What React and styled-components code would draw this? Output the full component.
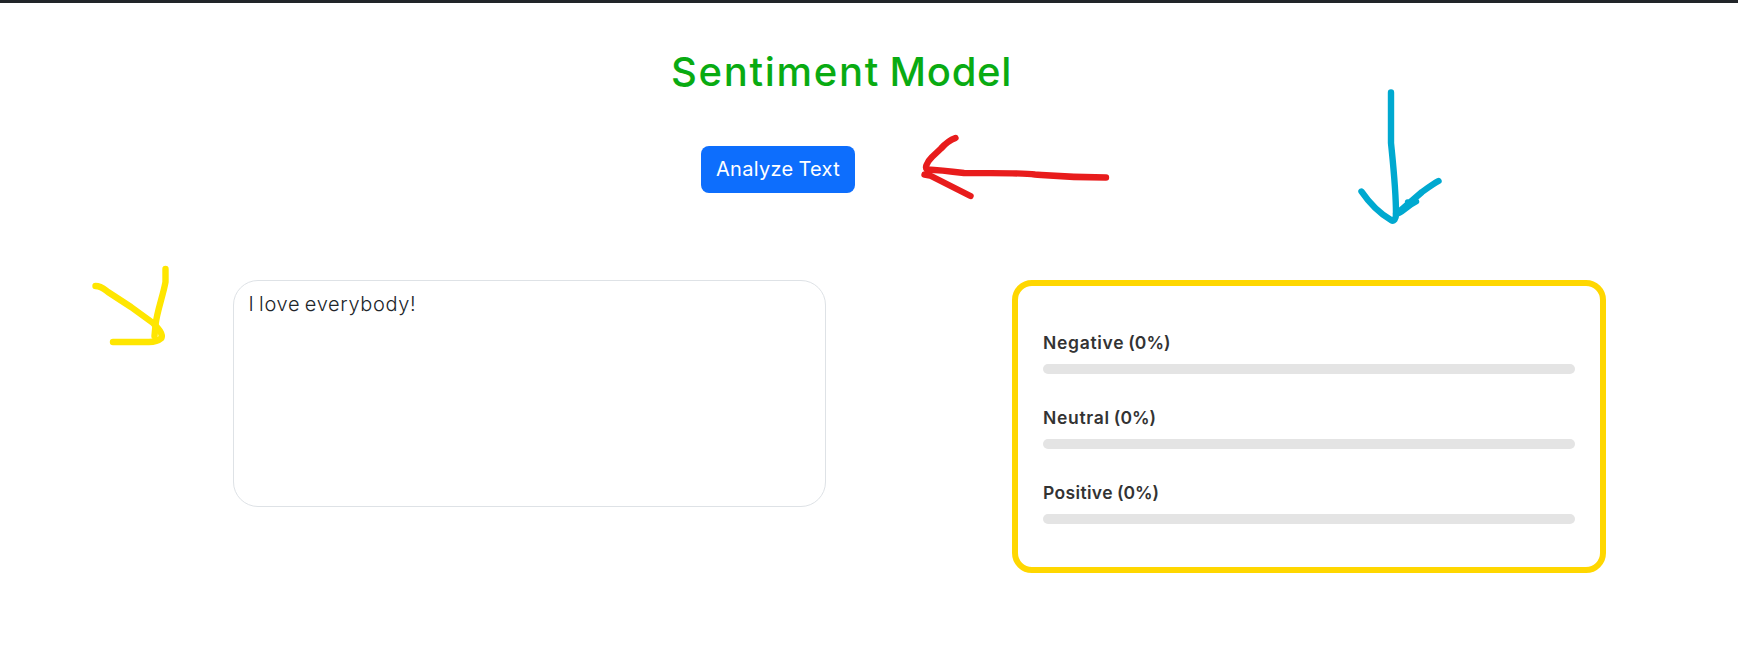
import React from "react";
import styled, { createGlobalStyle } from "styled-components";

const GlobalStyle = createGlobalStyle`
  *, *::before, *::after { box-sizing: border-box; }
  body {
    margin: 0;
    background: #fff;
    color: #212529;
    font-family: Inter, "Open Sans", sans-serif;
  }
`;

const Page = styled.div`
  position: relative;
  min-height: 651px;
  overflow: hidden;
`;

const NavEdge = styled.div`
  height: 3px;
  background: #212529;
`;

const Header = styled.header`
  display: flex;
  flex-direction: column;
  align-items: center;
  gap: 50px;
  padding: 45px 56px 0 0;
`;

const Title = styled.h1`
  display: flex;
  gap: 9.5px;
  width: 340px;
  margin: 0;
  color: #09ab12;
  font-size: 40px;
  font-weight: 500;
  line-height: 48px;
  white-space: nowrap;
`;

const Word = styled.span`
  letter-spacing: ${(p) => p.$track}px;
`;

const AnalyzeButton = styled.button`
  width: 154px;
  height: 47px;
  margin-right: 126px;
  padding: 0 0 2px;
  border: 0;
  border-radius: 8px;
  background: #0d6efd;
  color: #fff;
  font-family: inherit;
  font-size: 20px;
  letter-spacing: 0.3px;
  word-spacing: -1px;
  white-space: nowrap;
`;

const Columns = styled.main`
  display: grid;
  grid-template-columns: 593px 594px;
  gap: 186px;
  align-items: start;
  padding: 87px 0 0 233px;
`;

const TextInput = styled.textarea`
  display: block;
  width: 100%;
  height: 227px;
  padding: 8px 14.5px;
  border: 1px solid #dee2e6;
  border-radius: 25px;
  outline: 0;
  resize: none;
  background: #fff;
  color: #212529;
  font-family: inherit;
  font-size: 20px;
  font-weight: 350;
  line-height: 30px;
  letter-spacing: 0.65px;
  word-spacing: -1.6px;
`;

const ResultCard = styled.section`
  display: flex;
  flex-direction: column;
  gap: 30px;
  padding: 43px 25px;
  border: 6px solid #ffd700;
  border-radius: 20px;
`;

const Score = styled.div`
  display: flex;
  flex-direction: column;
  gap: 8px;
`;

const ScoreLabel = styled.div`
  display: flex;
  gap: 4px;
  color: #333;
  font-size: 17.5px;
  font-weight: 600;
  line-height: 27px;
`;

const Track = styled.div`
  height: 10px;
  border-radius: 5px;
  overflow: hidden;
  background: #e4e4e4;
`;

const Fill = styled.div`
  height: 100%;
  background: #0d6efd;
`;

const Annotations = styled.svg`
  position: absolute;
  inset: 0;
  pointer-events: none;
  fill: none;
  stroke-width: 6.4;
  stroke-linecap: round;
  stroke-linejoin: round;
`;

const scores = [
  { name: "Negative", value: 0, track: 0.7 },
  { name: "Neutral", value: 0, track: 0.7 },
  { name: "Positive", value: 0, track: 0.35 },
];

export default function App() {
  return (
    <Page>
      <GlobalStyle />
      <NavEdge />
      <Header>
        <Title>
          <Word $track={1.7}>Sentiment</Word>
          <Word $track={0.7}>Model</Word>
        </Title>
        <AnalyzeButton type="button">Analyze Text</AnalyzeButton>
      </Header>
      <Columns>
        <TextInput defaultValue="I love everybody!" spellCheck={false} />
        <ResultCard>
          {scores.map((s) => (
            <Score key={s.name}>
              <ScoreLabel>
                <Word $track={s.track}>{s.name}</Word>
                <Word $track={0}>({s.value}%)</Word>
              </ScoreLabel>
              <Track>
                <Fill style={{ width: `${s.value}%` }} />
              </Track>
            </Score>
          ))}
        </ResultCard>
      </Columns>
      <Annotations width="1738" height="651" viewBox="0 0 1738 651">
        <g stroke="#e81c1c">
          <path d="M955.5 138C950 140 945 144 941 148.500L932 157C926 163 925 168 927 169.500C940 170 952 171.500 964 173C990 173.500 1020 172.500 1035 174.500C1055 176 1070 177.500 1106 177.500" />
          <path d="M924.500 174.500L930 175.500L970.500 196" />
        </g>
        <g stroke="#00a9d0">
          <path d="M1391 92.500V143C1393 163 1396 190 1396 214C1396 219 1394 222 1391 220C1379 213 1370 204 1361.500 191.500" />
          <path d="M1396 214C1402 213 1405 207 1416 201.500L1408 202.500M1400 211L1422 192C1429 187 1433 184 1438.500 181" />
        </g>
        <g stroke="#ffe600">
          <path d="M95.500 286C101 286 104 289 108 292L131 307L153 323C159 329 163 334 161.500 338C158 341 154 342 149 342H113" />
          <path d="M165.500 269V282C163 296 157 311 155.500 325L154.500 336" />
        </g>
      </Annotations>
    </Page>
  );
}
